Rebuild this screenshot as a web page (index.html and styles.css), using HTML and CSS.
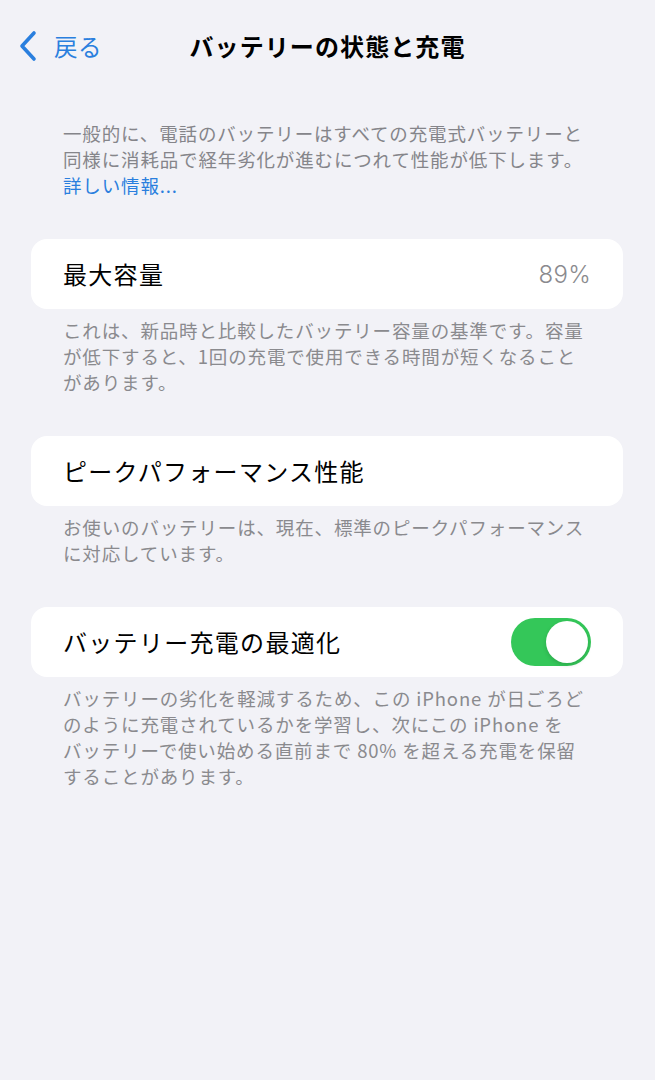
FILE: index.html
```html
<!DOCTYPE html>
<html lang="ja">
<head>
<meta charset="utf-8">
<link rel="stylesheet" href="styles.css">
</head>
<body>
<div class="screen">
  <header class="nav">
    <a class="back">
      <svg class="chev" width="20" height="32" viewBox="0 0 20 32"><path d="M16 3 L4 16 L16 29" fill="none" stroke="#2a7fde" stroke-width="3.6" stroke-linecap="round" stroke-linejoin="round"/></svg>
      <span>戻る</span>
    </a>
    <h1 class="title">バッテリーの状態と充電</h1>
  </header>

  <p class="note intro">一般的に、電話のバッテリーはすべての充電式バッテリーと<br>同様に消耗品で経年劣化が進むにつれて性能が低下します。<br><span class="link">詳しい情報...</span></p>

  <div class="card">
    <span class="label">最大容量</span>
    <span class="value">89%</span>
  </div>
  <p class="note">これは、新品時と比較したバッテリー容量の基準です。容量<br>が低下すると、1回の充電で使用できる時間が短くなること<br>があります。</p>

  <div class="card">
    <span class="label">ピークパフォーマンス性能</span>
  </div>
  <p class="note">お使いのバッテリーは、現在、標準のピークパフォーマンス<br>に対応しています。</p>

  <div class="card">
    <span class="label">バッテリー充電の最適化</span>
    <span class="toggle"><span class="knob"></span></span>
  </div>
  <p class="note">バッテリーの劣化を軽減するため、この iPhone が日ごろど<br>のように充電されているかを学習し、次にこの iPhone を<br>バッテリーで使い始める直前まで 80% を超える充電を保留<br>することがあります。</p>
</div>
</body>
</html>
```
FILE: styles.css
```css
html, body {
  margin: 0;
  padding: 0;
  background: #f2f2f7;
}
body {
  font-family: "Noto Sans CJK JP", "Noto Sans", sans-serif;
  color: #000;
}
.screen {
  width: 655px;
  min-height: 1080px;
  background: #f2f2f7;
}
.nav {
  position: relative;
  height: 92px;
  display: flex;
  align-items: flex-start;
  justify-content: center;
}
.back {
  position: absolute;
  left: 18px;
  top: 30px;
  display: flex;
  align-items: center;
  gap: 16px;
  color: #2a7fde;
  font-size: 23.5px;
  line-height: 32px;
  letter-spacing: 0.5px;
}
.chev { display: block; }
.title {
  margin: 0;
  padding-top: 28px;
  font-size: 24px;
  line-height: 36px;
  font-weight: 700;
  letter-spacing: 1.1px;
}
.note {
  margin: 0 32px 0 63px;
  font-size: 18.5px;
  line-height: 26px;
  color: #8a8a8e;
  white-space: nowrap;
  letter-spacing: 0.85px;
}
.intro {
  margin-top: 28px;
  margin-bottom: 41px;
  color: #85858a;
}
.link { color: #2a7fde; }
.card {
  margin: 0 32px 8px 31px;
  height: 70px;
  background: #fff;
  border-radius: 16px;
  display: flex;
  align-items: center;
  justify-content: space-between;
  padding: 0 32px;
  box-sizing: border-box;
}
.card + .note { margin-bottom: 41px; }
.label {
  font-size: 24px;
  line-height: 32px;
  letter-spacing: 1.3px;
}
.value {
  font-size: 24px;
  color: #8a8a8e;
  font-family: "Inter", "Noto Sans", sans-serif;
  font-weight: 300;
  letter-spacing: 0.3px;
}
.toggle {
  width: 80px;
  height: 48px;
  border-radius: 24px;
  background: #34c759;
  display: flex;
  align-items: center;
  justify-content: flex-end;
  padding: 3px;
  box-sizing: border-box;
}
.knob {
  width: 42px;
  height: 42px;
  border-radius: 50%;
  background: #fff;
  box-shadow: 0 2px 4px rgba(0,0,0,0.15);
}
```
